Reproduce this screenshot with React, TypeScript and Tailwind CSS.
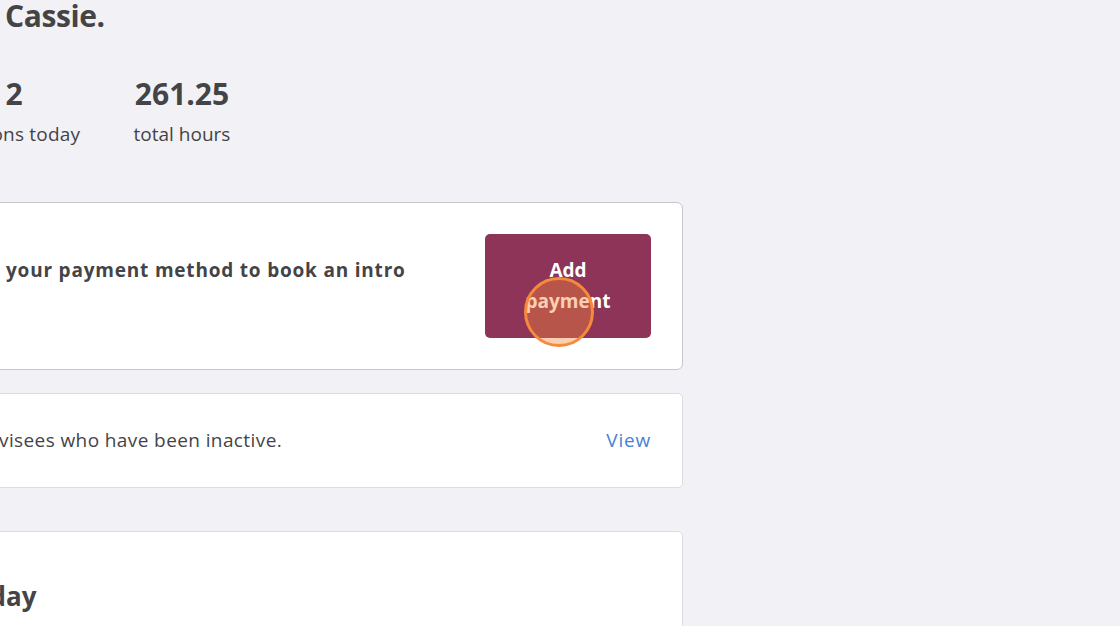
import React from 'react';

function Clipped({ hidden, at, children }: { hidden: string; at: string; children: React.ReactNode }) {
    // hidden prefix overflows to the left of the viewport, visible part starts at `at`
    return (
        <div className="flex whitespace-nowrap">
            <div className={`flex justify-end shrink-0 ${at}`}>
                <span className="whitespace-pre">{hidden}</span>
            </div>
            <span>{children}</span>
        </div>
    );
}

export default function App() {
    return (
        <div className="w-[1120px] h-[626px] overflow-hidden bg-[#f2f1f6] font-['Open_Sans',sans-serif] text-[#444447]">
            <div className="flex flex-col w-[683px]">
                <h1 className="mt-[1px] text-[30px] font-bold leading-none tracking-[-0.4px]">
                    <Clipped hidden="Welcome back, " at="w-[5px]">Cassie.</Clipped>
                </h1>

                <div className="flex mt-[48px]">
                    <div className="flex flex-col items-center w-[150px] ml-[-61px] shrink-0">
                        <div className="text-[30px] font-bold leading-none">2</div>
                        <div className="mt-[16px] text-[19px] leading-none whitespace-nowrap tracking-[0.2px]">sessions today</div>
                    </div>
                    <div className="flex flex-col items-center w-[150px] ml-[18px] shrink-0">
                        <div className="text-[30px] font-bold leading-none">261.25</div>
                        <div className="mt-[16px] text-[19px] leading-none whitespace-nowrap">total hours</div>
                    </div>
                </div>

                <div className="mt-[58px] ml-[-40px] h-[168px] flex items-center justify-between bg-white border-[1.5px] border-[#c7c6cb] rounded-[6px] pr-[31px]">
                    <div className="pl-[40px] pb-[31px] text-[19px] font-bold leading-[31px] tracking-[0.8px]">
                        <Clipped hidden="Add " at="w-[5px]">your payment method to book an intro</Clipped>
                    </div>
                    <button className="w-[166px] h-[104px] shrink-0 rounded-[5px] bg-[#8e3458] text-white text-[19px] font-bold leading-[31px]">
                        Add<br />payment
                    </button>
                </div>

                <div className="mt-[23px] ml-[-40px] h-[95px] flex items-center justify-between bg-white border border-[#dddce1] rounded-[5px] pr-[31px]">
                    <div className="pl-[38px] text-[19px] leading-none tracking-[0.4px]">
                        <Clipped hidden="You have 3 ad" at="w-[0px]">visees who have been inactive.</Clipped>
                    </div>
                    <a className="text-[19px] text-[#4b7fd5] leading-none tracking-[0.8px]">View</a>
                </div>

                <div className="mt-[43px] ml-[-40px] h-[140px] bg-white border border-[#dddce1] rounded-[5px] pt-[51px]">
                    <h2 className="pl-[40px] text-[26px] font-bold leading-none">
                        <Clipped hidden="Sessions tod" at="w-[5px]">ay</Clipped>
                    </h2>
                </div>
            </div>

            <div className="fixed left-[524px] top-[277px] w-[70px] h-[70px] rounded-full border-[3px] border-[#f58a3a] bg-[rgba(245,136,58,0.4)]" />
        </div>
    );
}
